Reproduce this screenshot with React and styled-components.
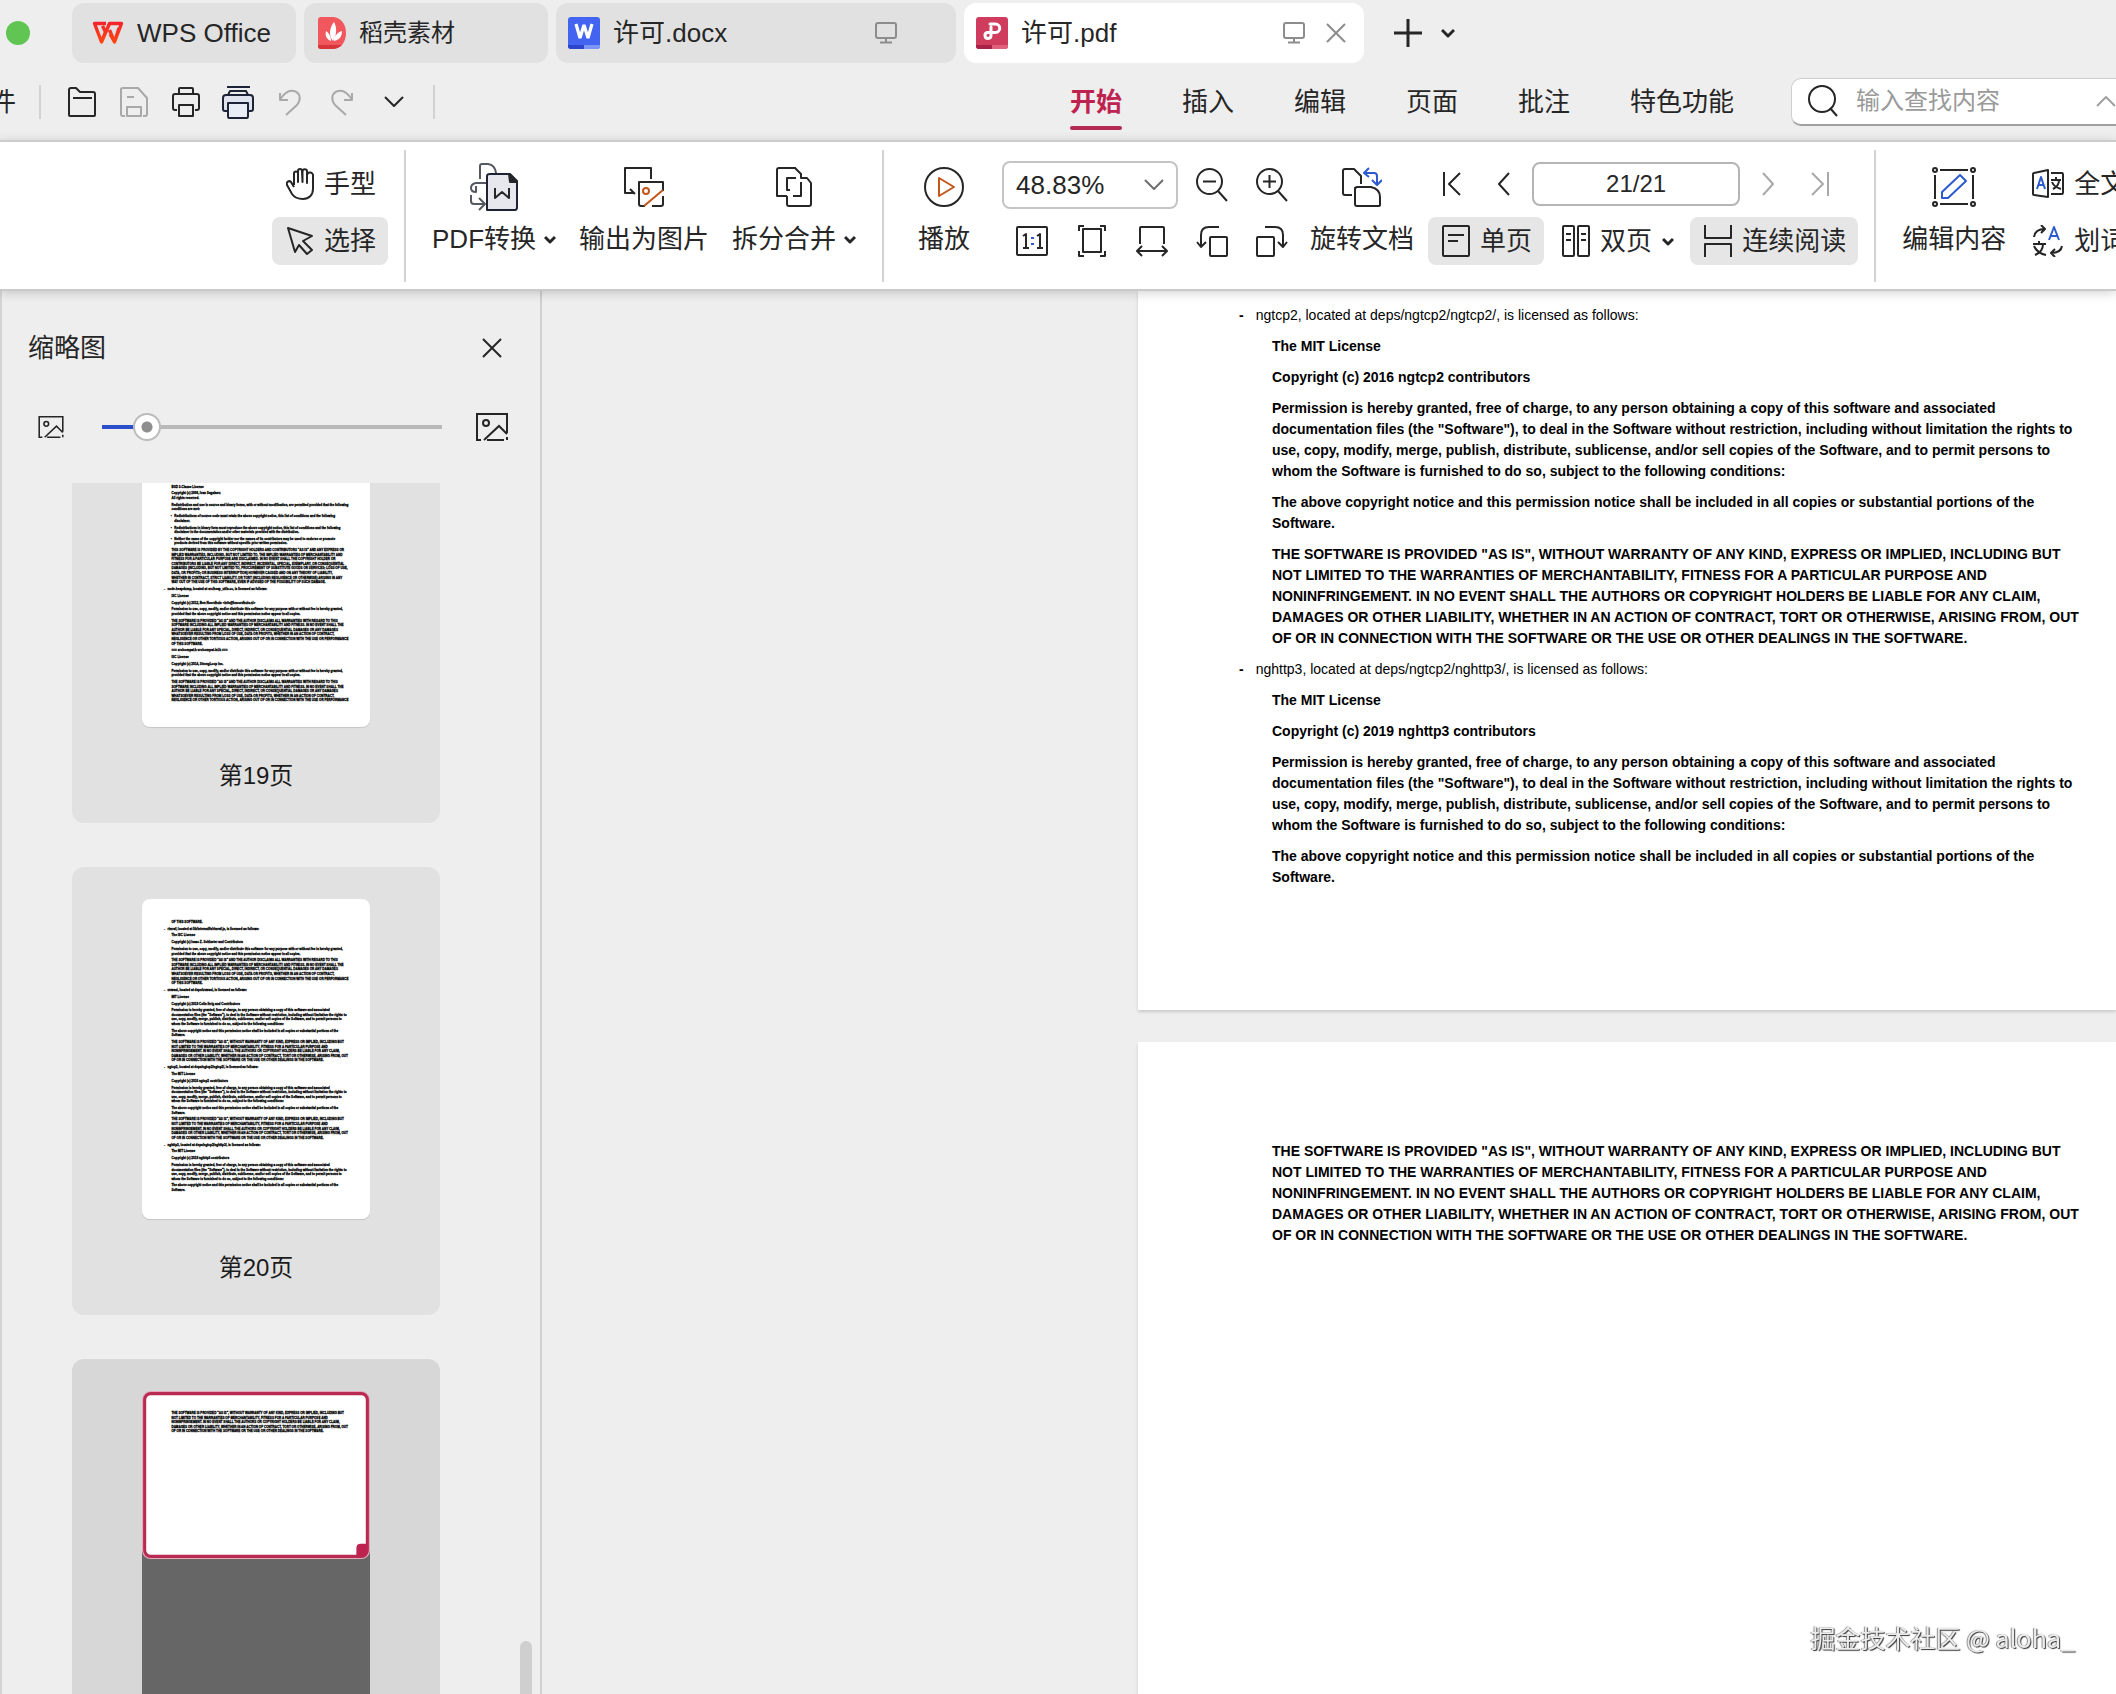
import React, { useLayoutEffect, useRef, useState } from 'react';
import styled, { createGlobalStyle, css } from 'styled-components';

const uiFont = '"Liberation Sans", "Noto Sans CJK SC", sans-serif';
const ink = '#262626';
const brand = '#be2350';

const GlobalStyle = createGlobalStyle`
  * { box-sizing: border-box; }
  body { margin: 0; background: #eeeeee; color: ${ink}; font-family: ${uiFont}; overflow: hidden; }
  button, input, select { font: inherit; color: inherit; margin: 0; }
  svg { display: block; flex: none; }
`;

/* ---------- document content ---------- */

const mitPermission = [
  'Permission is hereby granted, free of charge, to any person obtaining a copy of this software and associated',
  'documentation files (the "Software"), to deal in the Software without restriction, including without limitation the rights to',
  'use, copy, modify, merge, publish, distribute, sublicense, and/or sell copies of the Software, and to permit persons to',
  'whom the Software is furnished to do so, subject to the following conditions:',
];
const mitNotice = [
  'The above copyright notice and this permission notice shall be included in all copies or substantial portions of the',
  'Software.',
];
const mitWarranty = [
  'THE SOFTWARE IS PROVIDED "AS IS", WITHOUT WARRANTY OF ANY KIND, EXPRESS OR IMPLIED, INCLUDING BUT',
  'NOT LIMITED TO THE WARRANTIES OF MERCHANTABILITY, FITNESS FOR A PARTICULAR PURPOSE AND',
  'NONINFRINGEMENT. IN NO EVENT SHALL THE AUTHORS OR COPYRIGHT HOLDERS BE LIABLE FOR ANY CLAIM,',
  'DAMAGES OR OTHER LIABILITY, WHETHER IN AN ACTION OF CONTRACT, TORT OR OTHERWISE, ARISING FROM, OUT',
  'OF OR IN CONNECTION WITH THE SOFTWARE OR THE USE OR OTHER DEALINGS IN THE SOFTWARE.',
];
const iscPermission = [
  'Permission to use, copy, modify, and/or distribute this software for any purpose with or without fee is hereby granted,',
  'provided that the above copyright notice and this permission notice appear in all copies.',
];
const iscWarranty = [
  'THE SOFTWARE IS PROVIDED "AS IS" AND THE AUTHOR DISCLAIMS ALL WARRANTIES WITH REGARD TO THIS',
  'SOFTWARE INCLUDING ALL IMPLIED WARRANTIES OF MERCHANTABILITY AND FITNESS. IN NO EVENT SHALL THE',
  'AUTHOR BE LIABLE FOR ANY SPECIAL, DIRECT, INDIRECT, OR CONSEQUENTIAL DAMAGES OR ANY DAMAGES',
  'WHATSOEVER RESULTING FROM LOSS OF USE, DATA OR PROFITS, WHETHER IN AN ACTION OF CONTRACT,',
  'NEGLIGENCE OR OTHER TORTIOUS ACTION, ARISING OUT OF OR IN CONNECTION WITH THE USE OR PERFORMANCE',
];
const body = (...lines) => ({ kind: 'body', lines });
const item = (line) => ({ kind: 'item', lines: [line] });
const bullet = (...lines) => ({ kind: 'bullet', lines });

const page19 = [
  body('BSD 3-Clause License'),
  body('Copyright (c) 2006, Ivan Sagalaev.', 'All rights reserved.'),
  body(
    'Redistribution and use in source and binary forms, with or without modification, are permitted provided that the following',
    'conditions are met:'
  ),
  bullet('Redistributions of source code must retain the above copyright notice, this list of conditions and the following', 'disclaimer.'),
  bullet(
    'Redistributions in binary form must reproduce the above copyright notice, this list of conditions and the following',
    'disclaimer in the documentation and/or other materials provided with the distribution.'
  ),
  bullet(
    'Neither the name of the copyright holder nor the names of its contributors may be used to endorse or promote',
    'products derived from this software without specific prior written permission.'
  ),
  body(
    'THIS SOFTWARE IS PROVIDED BY THE COPYRIGHT HOLDERS AND CONTRIBUTORS "AS IS" AND ANY EXPRESS OR',
    'IMPLIED WARRANTIES, INCLUDING, BUT NOT LIMITED TO, THE IMPLIED WARRANTIES OF MERCHANTABILITY AND',
    'FITNESS FOR A PARTICULAR PURPOSE ARE DISCLAIMED. IN NO EVENT SHALL THE COPYRIGHT HOLDER OR',
    'CONTRIBUTORS BE LIABLE FOR ANY DIRECT, INDIRECT, INCIDENTAL, SPECIAL, EXEMPLARY, OR CONSEQUENTIAL',
    'DAMAGES (INCLUDING, BUT NOT LIMITED TO, PROCUREMENT OF SUBSTITUTE GOODS OR SERVICES; LOSS OF USE,',
    'DATA, OR PROFITS; OR BUSINESS INTERRUPTION) HOWEVER CAUSED AND ON ANY THEORY OF LIABILITY,',
    'WHETHER IN CONTRACT, STRICT LIABILITY, OR TORT (INCLUDING NEGLIGENCE OR OTHERWISE) ARISING IN ANY',
    'WAY OUT OF THE USE OF THIS SOFTWARE, EVEN IF ADVISED OF THE POSSIBILITY OF SUCH DAMAGE.'
  ),
  item('node-heapdump, located at src/heap_utils.cc, is licensed as follows:'),
  body('ISC License'),
  body('Copyright (c) 2012, Ben Noordhuis <info@bnoordhuis.nl>'),
  body(...iscPermission),
  body(...iscWarranty, 'OF THIS SOFTWARE.'),
  body('=== src/compat.h src/compat-inl.h ==='),
  body('ISC License'),
  body('Copyright (c) 2014, StrongLoop Inc.'),
  body(...iscPermission),
  body(...iscWarranty),
];

const page20Head = [
  body('OF THIS SOFTWARE.'),
  item('rimraf, located at lib/internal/fs/rimraf.js, is licensed as follows:'),
  body('The ISC License'),
  body('Copyright (c) Isaac Z. Schlueter and Contributors'),
  body(...iscPermission),
  body(...iscWarranty, 'OF THIS SOFTWARE.'),
  item('uvwasi, located at deps/uvwasi, is licensed as follows:'),
  body('MIT License'),
  body('Copyright (c) 2019 Colin Ihrig and Contributors'),
  body(...mitPermission),
  body(...mitNotice),
  body(...mitWarranty),
];
const page20Tail = [
  item('ngtcp2, located at deps/ngtcp2/ngtcp2/, is licensed as follows:'),
  body('The MIT License'),
  body('Copyright (c) 2016 ngtcp2 contributors'),
  body(...mitPermission),
  body(...mitNotice),
  body(...mitWarranty),
  item('nghttp3, located at deps/ngtcp2/nghttp3/, is licensed as follows:'),
  body('The MIT License'),
  body('Copyright (c) 2019 nghttp3 contributors'),
  body(...mitPermission),
  body(...mitNotice),
];

const page21 = [body(...mitWarranty)];

/* ---------- icons ---------- */

const Icon = ({ w = 28, h = 32, stroke = ink, sw = 2, children }) => (
  <svg width={w} height={h} viewBox={`0 0 ${w} ${h}`} fill="none" stroke={stroke} strokeWidth={sw} strokeLinejoin="round" aria-hidden="true">
    {children}
  </svg>
);

const WpsLogo = () => (
  <svg width="32" height="32" viewBox="0 0 32 32" fill="none" aria-hidden="true">
    <defs>
      <linearGradient id="wps" x1="0" y1="4" x2="0" y2="27" gradientUnits="userSpaceOnUse">
        <stop offset="0" stopColor="#f5202d" />
        <stop offset="1" stopColor="#ff4a10" />
      </linearGradient>
    </defs>
    <path d="M14 6.500H2.500L9.500 25L17.500 6.500H29.500L22.500 25L17.500 13M9.500 25L13.500 15L10.500 9M18 17L22.500 25L27 11" stroke="url(#wps)" strokeWidth="3.400" strokeLinejoin="round" />
  </svg>
);
const DocerLogo = () => (
  <svg width="28" height="32" viewBox="0 0 28 32" aria-hidden="true">
    <path d="M3 0H14C23 0 28 7 28 16S23 32 14 32H3Q0 32 0 29V3Q0 0 3 0Z" fill="#f0585d" />
    <path d="M0 28H24Q20 32 14 32H3Q0 32 0 29Z" fill="#d9363c" />
    <path d="M15 24C10 18 12 10 16 5C19 10 19 18 15 24ZM13 24C8 22 7 18 8 14C11 16 13 19 13 24ZM16 24C16 19 20 15 24 14C24 20 21 23 16 24Z" fill="#fff" />
  </svg>
);
const WordLogo = () => (
  <svg width="32" height="32" viewBox="0 0 32 32" aria-hidden="true">
    <rect width="32" height="32" rx="3" fill="#4264f0" />
    <path d="M0 28H16V32H3Q0 32 0 29Z" fill="#2b46cc" />
    <path d="M16 28H32V29Q32 32 29 32H16Z" fill="#7b94f7" />
    <path d="M8 7L12 21L16 8L20 21L24 7" fill="none" stroke="#fff" strokeWidth="3.200" strokeLinejoin="bevel" />
  </svg>
);
const PdfLogo = () => (
  <svg width="32" height="32" viewBox="0 0 32 32" aria-hidden="true">
    <rect width="32" height="32" rx="3" fill="#cf3c5d" />
    <path d="M0 28H16V32H3Q0 32 0 29Z" fill="#a82247" />
    <path d="M16 28H32V29Q32 32 29 32H16Z" fill="#e0607c" />
    <path d="M14 7H19.500A4 4 0 0 1 19.500 15.500H11.500A3 3 0 1 0 15 18.500V10" fill="none" stroke="#fff" strokeWidth="3" strokeLinecap="round" />
  </svg>
);
const Monitor = () => (
  <Icon w={24} h={24} stroke="#8c8c8c">
    <rect x="2" y="2" width="20" height="15" rx="2" />
    <path d="M12 17V21M6 21.500H18" />
  </Icon>
);
const Cross = ({ size = 20, color = ink }) => (
  <Icon w={size} h={size} stroke={color}>
    <path d={`M1 1L${size - 1} ${size - 1}M${size - 1} 1L1 ${size - 1}`} />
  </Icon>
);
const SmallChevron = () => (
  <Icon w={12} h={12} sw={3}>
    <path d="M1 4L6 9L11 4" />
  </Icon>
);
const ThinChevron = ({ color = ink, up }) => (
  <Icon w={20} h={12} stroke={color}>
    <path d={up ? 'M1 11L10 2L19 11' : 'M1 1L10 10L19 1'} />
  </Icon>
);

const quickIcons = [
  { label: '打开', art: <Icon><path d="M1 29V4Q1 2 3 2H8L12 6H25Q27 6 27 8V29Q27 30 26 30H2Q1 30 1 29ZM5 12H24" /></Icon> },
  { label: '保存', off: true, art: <Icon stroke="#a9a9a9"><path d="M5 30H3Q1 30 1 28V3Q1 2 3 2H18L27 12V28Q27 30 25 30H23M7 30V21H21V30ZM7 11H14" /></Icon> },
  { label: '打印', art: <Icon><path d="M7 8V3Q7 2 8 2H20Q21 2 21 3V8M5 24H3Q1 24 1 22V10Q1 8 3 8H25Q27 8 27 10V22Q27 24 25 24H23M7 19H21V30H7Z" /></Icon> },
  { label: '快速打印', art: <Icon w={32} h={34} stroke="#1d2438"><path d="M5 2H28M6 10L8 6H24L26 10" /><path d="M6 26H3Q1 26 1 24V13Q1 10 4 10H28Q31 10 31 13V24Q31 26 29 26H26" fill="#dfe4ee" /><path d="M6 18H26V31Q26 33 25 33H7Q6 33 6 31Z" fill="#e9edf6" /></Icon> },
  { label: '撤销', off: true, art: <Icon w={24} h={28} stroke="#a9a9a9"><path d="M2 5V12H10M2 12C6 5 11 2 16 3C23 5 23 12 19 17L8 27" /></Icon> },
  { label: '恢复', off: true, art: <Icon w={24} h={28} stroke="#a9a9a9"><path d="M22 5V12H14M22 12C18 5 13 2 8 3C1 5 1 12 5 17L16 27" /></Icon> },
  { label: '更多', art: <ThinChevron /> },
];

const HandIcon = () => (
  <Icon>
    <path d="M8 17V5.500A2 2 0 0 1 12 5.500V14V3A2 2 0 0 1 16 3L16.500 14V3.500A2 2 0 0 1 21 3.500V15V7A2 2 0 0 1 27 8V21C27 27 23 31 17 31C11 31 8 29 6 26L1 17C0 14 3 12 5 14L8 19" />
  </Icon>
);
const ArrowIcon = () => (
  <Icon>
    <path d="M2 3L26 11L17 16L26 25L21 29L13 20L9 27Z" />
  </Icon>
);
const ConvertIcon = () => (
  <Icon w={48} h={48}>
    <path d="M10 16V3Q10 1 12 1H18Q25 2 26 10M18 20H6Q1 21 1 25Q1 29 6 29V23M1 32V38Q1 41 4 41H14M9 35L15 41L9 47" stroke="#55585e" />
    <path d="M20 11H40L47 18V44Q47 47 45 47H17V13Q17 11 20 11Z" fill="#e6e8ee" stroke="#1d2333" />
    <path d="M39 11L47 19H40Z" fill="#1d2333" />
    <path d="M25 25V35L32 29L39 35V25" />
  </Icon>
);
const ExportIcon = () => (
  <Icon w={40} h={40}>
    <path d="M27 12V1H1V26H10M6 22L11 27M21 39H17Q15 39 15 37V15H39V24M39 29V37Q39 39 37 39H28" />
    <g stroke="#c2561b"><circle cx="22" cy="24" r="3" /><path d="M20 39L39 23" /></g>
  </Icon>
);
const MergeIcon = () => (
  <Icon w={36} h={40}>
    <path d="M20 1H3Q1 1 1 3V29H11M19 1L25 7V11H31L35 16V37Q35 39 33 39H13Q11 39 11 37V29" />
    <path d="M20 11H11V23H14M17 29H25V15" />
  </Icon>
);
const PlayIcon = () => (
  <Icon w={40} h={40}>
    <circle cx="20" cy="20" r="19" />
    <path d="M15 11V29L30 20Z" stroke="#c2561b" />
  </Icon>
);
const ZoomIcon = ({ plus }) => (
  <Icon w={32} h={34}>
    <circle cx="13.500" cy="13.500" r="12.500" />
    <path d={`M7 13.500H20M22 23L31 33${plus ? 'M13.500 7V20' : ''}`} />
  </Icon>
);
const RotateDocIcon = () => (
  <Icon w={40} h={40}>
    <path d="M10 28H3Q1 28 1 26V4Q1 2 3 2H12L19 9V17M15 20H29Q38 22 38 30V38Q38 39 36 39H15Q13 39 13 37V21Z" />
    <path d="M27 1L22 6L27 10M22 6H32Q35 6 35 9V17M30 13L35 18L40 13" stroke="#2c5bd0" />
  </Icon>
);
const ActualSizeIcon = () => (
  <Icon w={32} h={30}>
    <rect x="1" y="1" width="30" height="28" rx="1" />
    <path d="M7 10L10 8V22M7 22H13M21 10L24 8V22M21 22H27" />
    <path d="M15 12H18M15 18H18" stroke="#2c5bd0" />
  </Icon>
);
const FitPageIcon = () => (
  <Icon>
    <path d="M1 6V1H6M22 1H27V6M27 26V31H22M6 31H1V26" />
    <rect x="5" y="4" width="18" height="23" />
  </Icon>
);
const FitWidthIcon = () => (
  <Icon w={32} h={32}>
    <path d="M4 19V3Q4 2 5 2H27Q28 2 28 3V19M1 26H31M6 21L1 26L6 31M26 21L31 26L26 31" />
  </Icon>
);
const RotateLeftIcon = () => (
  <Icon w={32} h={32}>
    <rect x="14" y="12" width="17" height="19" rx="1" />
    <path d="M23 2H13Q5 2 5 10V22M1 17L5 22L10 17" />
  </Icon>
);
const RotateRightIcon = () => (
  <Icon w={32} h={32}>
    <rect x="1" y="12" width="17" height="19" rx="1" />
    <path d="M9 2H19Q27 2 27 10V22M22 17L27 22L31 17" />
  </Icon>
);
const SinglePageIcon = () => (
  <Icon><rect x="1" y="1" width="26" height="30" rx="1" /><path d="M6 10H22M6 16H16" /></Icon>
);
const DoublePageIcon = () => (
  <Icon><rect x="1" y="1" width="11" height="30" rx="1" /><rect x="16" y="1" width="11" height="30" rx="1" /><path d="M4 9H9M4 15H9M19 9H24M19 15H24" /></Icon>
);
const ContinuousIcon = () => (
  <Icon><path d="M1 0V13H27V0M1 32V19H27V32" /></Icon>
);
const EditIcon = () => (
  <Icon w={44} h={40}>
    <path d="M8 3H36M8 37H36M3 8V32M41 8V32" />
    <circle cx="3" cy="3" r="2" /><circle cx="41" cy="3" r="2" /><circle cx="3" cy="37" r="2" /><circle cx="41" cy="37" r="2" />
    <path d="M10 31V25L28 8L34 14L16 31Z" stroke="#2c5bd0" />
  </Icon>
);
const TranslateIcon = () => (
  <Icon w={32} h={32}>
    <path d="M1 6Q1 5 2 5L16 2V29L2 27Q1 27 1 26ZM19 5H30Q31 5 31 7V24Q31 26 30 26H19M19 12H29M24 9V12M21 21Q27 18 27 12M20 14Q22 19 29 21" />
    <path d="M5 21L9 9L13 21M6 17H12" stroke="#2c5bd0" />
  </Icon>
);
const WordTranslateIcon = () => (
  <Icon w={32} h={32}>
    <path d="M2 12Q3 4 13 4M9 0L13 4L9 8M30 21Q29 28 19 28M23 24L19 28L23 32M1 19H14M7 16V19M3 30Q11 27 11 19M2 21Q5 28 14 30" />
    <path d="M17 15L22 2L27 15M19 11H25" stroke="#2c5bd0" />
  </Icon>
);
const PictureIcon = ({ w, h }) => (
  <svg width={w} height={h} viewBox="0 0 32 28" fill="none" stroke={ink} strokeWidth="2" aria-hidden="true">
    <path d="M5 27H1V1H31V20M11 27H28M31 24V27" />
    <circle cx="10" cy="10" r="3" />
    <path d="M8 27L23 13L31 21" />
  </svg>
);

/* ---------- shell ---------- */

const Shell = styled.div`
  display: flex;
  flex-direction: column;
  height: 100vh;
  overflow: hidden;
`;
const TabStrip = styled.header`
  display: flex;
  align-items: center;
  gap: 8px;
  height: 63px;
  padding: 3px 6px 0;
`;
const WindowDot = styled.button`
  width: 24px;
  height: 24px;
  margin-right: 34px;
  padding: 0;
  border: 0;
  border-radius: 50%;
  background: #61c554;
`;
const Tab = styled.div`
  display: flex;
  align-items: center;
  gap: 20px;
  width: ${(p) => p.$width}px;
  height: 60px;
  padding: 0 ${(p) => (p.$active ? 18 : 58)}px 0 ${(p) => p.$pad}px;
  border-radius: 12px;
  background: ${(p) => (p.$active ? '#ffffff' : '#e1e1e1')};
`;
const TabTitle = styled.button`
  display: flex;
  flex: 1;
  align-items: center;
  gap: 13px;
  padding: 0;
  border: 0;
  background: none;
  font-size: ${(p) => p.$size}px;
  line-height: 32px;
  white-space: nowrap;
`;
const TabActions = styled.div`
  display: flex;
  align-items: center;
  gap: 19px;
  padding-left: 22px;
`;
const BareButton = styled.button`
  display: flex;
  align-items: center;
  justify-content: center;
  width: ${(p) => p.$w || 'auto'};
  height: ${(p) => p.$h || 'auto'};
  padding: 0;
  border: 0;
  background: none;
`;
const MenuBar = styled.div`
  display: flex;
  align-items: center;
  height: 77px;
  font-size: 26px;
  line-height: 32px;
`;
const FileMenu = styled.button`
  display: flex;
  justify-content: flex-end;
  width: 16px;
  margin-right: 23px;
  padding: 0;
  border: 0;
  background: none;
  overflow: hidden;
  white-space: nowrap;
`;
const Rule = styled.span`
  flex: none;
  width: 2px;
  height: ${(p) => p.$h}px;
  background: #d2d2d2;
`;
const QuickTools = styled.div`
  display: flex;
  padding: 0 13px 0 15px;
`;
const MenuTabs = styled.nav`
  display: flex;
  gap: 60px;
  margin-left: auto;
`;
const MenuTab = styled.button`
  display: flex;
  flex-direction: column;
  height: 56px;
  padding: 12px 0 0;
  border: 0;
  background: none;
  white-space: nowrap;
  ${(p) =>
    p.$active &&
    css`
      color: ${brand};
      font-weight: 700;
      &::after {
        content: '';
        width: 100%;
        height: 4px;
        margin-top: 8px;
        border-radius: 2px;
        background: #b42a50;
      }
    `}
`;
const SearchBox = styled.label`
  display: flex;
  align-items: center;
  gap: 18px;
  width: 325px;
  height: 48px;
  margin-left: 57px;
  padding-left: 16px;
  border: 1px solid #cfcfcf;
  border-right: 0;
  border-bottom: 2px solid #a0a0a0;
  border-radius: 10px 0 0 10px;
  background: #fff;
  overflow: hidden;
  input {
    flex: 1;
    min-width: 0;
    padding: 0;
    border: 0;
    outline: 0;
    background: none;
    font-size: 24px;
  }
  input::placeholder { color: #9a9a9a; opacity: 1; }
`;

/* ---------- ribbon ---------- */

const Ribbon = styled.div`
  position: relative;
  z-index: 1;
  display: flex;
  height: 151px;
  padding: 8px 0 0 272px;
  border-top: 2px solid #cccccc;
  border-bottom: 2px solid #cacaca;
  background: #fff;
  box-shadow: 0 2px 10px rgba(0, 0, 0, 0.18);
  font-size: 26px;
  line-height: 32px;
  white-space: nowrap;
`;
const Group = styled.div`
  display: flex;
  flex: none;
  gap: ${(p) => p.$gap || 0}px;
  padding: 10px ${(p) => p.$right}px 0 ${(p) => p.$left}px;
`;
const Stack = styled.div`
  display: flex;
  flex-direction: column;
  align-items: flex-start;
  gap: 9px;
`;
const Row = styled.div`
  display: flex;
  align-items: center;
  gap: 4px;
  height: 48px;
`;
const ToolButton = styled.button`
  display: flex;
  align-items: center;
  gap: 10px;
  height: 48px;
  padding: 0 12px 0 14px;
  border: 0;
  border-radius: 8px;
  background: ${(p) => (p.$active ? '#e6e6e6' : 'transparent')};
`;
const BigButton = styled.button`
  display: flex;
  flex-direction: column;
  align-items: center;
  padding: 3px 0 0;
  border: 0;
  background: none;
`;
const IconWell = styled.span`
  display: flex;
  align-items: center;
  height: 48px;
  margin-bottom: 12px;
`;
const BigLabel = styled.span`
  display: flex;
  align-items: center;
  gap: 8px;
`;
const ZoomGrid = styled.div`
  display: grid;
  grid-template-columns: repeat(5, 60px);
  grid-auto-rows: 48px;
  row-gap: 8px;
  padding-top: 1px;
  margin: 0 8px 0 32px;
`;
const ZoomSelect = styled.span`
  display: grid;
  grid-column: span 3;
  width: 176px;
  border: 2px solid #c4c4c4;
  border-radius: 8px;
  align-items: center;
  select, svg { grid-area: 1 / 1; }
  select {
    appearance: none;
    height: 44px;
    padding: 0 12px;
    border: 0;
    background: none;
    outline: 0;
  }
  svg { justify-self: end; margin-right: 12px; pointer-events: none; }
`;
const NavBlock = styled(Stack)`
  margin-left: 14px;
`;
const PageInput = styled.input`
  width: 208px;
  height: 44px;
  padding: 0;
  border: 2px solid #b5b5b5;
  border-radius: 8px;
  background: #fff;
  font-size: 24px;
  text-align: center;
`;

/* ---------- workspace ---------- */

const Workspace = styled.div`
  display: flex;
  flex: 1;
  min-height: 0;
`;
const Sidebar = styled.aside`
  display: flex;
  flex: none;
  flex-direction: column;
  width: 542px;
  border-right: 2px solid #d0d0d0;
  border-left: 2px solid #d4d4d4;
`;
const SidebarHead = styled.div`
  display: flex;
  align-items: center;
  justify-content: space-between;
  padding: 41px 38px 0 26px;
  h2 { margin: 0; font-size: 26px; font-weight: 400; line-height: 32px; }
`;
const SizeRow = styled.div`
  display: flex;
  align-items: center;
  height: 40px;
  margin: 43px 32px 36px 36px;
`;
const Slider = styled.input`
  appearance: none;
  width: 340px;
  height: 28px;
  margin: 0 34px 0 38px;
  background: linear-gradient(#2b50cc, #2b50cc) 0 50% / 40px 4px no-repeat,
    linear-gradient(#b9b9b9, #b9b9b9) 0 50% / 100% 4px no-repeat;
  &::-webkit-slider-thumb {
    appearance: none;
    width: 28px;
    height: 28px;
    border: 2px solid #bcbcbc;
    border-radius: 50%;
    background: radial-gradient(circle, #8e8e8e 0 5px, #fff 6px);
  }
`;
const ThumbArea = styled.div`
  display: flex;
  flex: 1;
  min-height: 0;
  justify-content: space-between;
  padding: 0 8px 0 70px;
`;
const ThumbList = styled.ol`
  display: flex;
  flex-direction: column;
  gap: 44px;
  width: 368px;
  margin: 0;
  padding: 0;
  overflow-y: scroll;
  scrollbar-width: none;
  list-style: none;
`;
const ThumbCard = styled.li`
  display: flex;
  flex: none;
  flex-direction: column;
  align-items: center;
  height: 448px;
  padding-top: 32px;
  border-radius: 12px;
  background: ${(p) => (p.$active ? '#d7d7d7' : '#e1e1e1')};
`;
const ThumbFrame = styled.button`
  display: flex;
  flex: none;
  align-items: flex-start;
  width: 228px;
  height: 320px;
  padding: 0;
  border: 0;
  border-radius: 8px;
  background: ${(p) => (p.$active ? 'linear-gradient(transparent 160px, #666666 160px)' : '#ffffff')};
  box-shadow: ${(p) => (p.$active ? 'none' : '0 1px 1px rgba(0, 0, 0, 0.12)')};
  overflow: hidden;
`;
const ThumbLabel = styled.span`
  margin-top: 33px;
  color: #1c1c1c;
  font-size: 24px;
  line-height: 32px;
`;
const ScrollTrack = styled.div`
  display: flex;
  align-items: flex-end;
  width: 12px;
`;
const ScrollThumb = styled.div`
  width: 12px;
  height: 53px;
  border-radius: 6px 6px 0 0;
  background: #cfcfcf;
`;
const Viewer = styled.main`
  display: flex;
  flex: 1;
  flex-direction: column;
  gap: 32px;
  min-width: 0;
  padding-left: 596px;
  overflow: hidden;
`;
const Sheet = styled.article`
  flex: ${(p) => (p.$continued ? 'none' : '1')};
  padding: ${(p) => (p.$continued ? '14px 0 112px 134px' : '99px 0 0 134px')};
  background: #fff;
  box-shadow: 0 2px 3px rgba(0, 0, 0, 0.15);
  color: #000;
  font-family: "Liberation Sans", Arial, sans-serif;
  font-size: 14px;
  line-height: 21px;
  white-space: nowrap;
`;
const Para = styled.p`
  margin: 0 0 10px;
  font-weight: 700;
  span { display: block; }
`;
const ItemPara = styled.p`
  display: flex;
  gap: 12px;
  margin: 0 0 10px -33px;
`;
const Watermark = styled.div`
  position: fixed;
  right: 41px;
  bottom: 41px;
  z-index: 2;
  color: #ececec;
  font-family: "Noto Sans CJK SC", sans-serif;
  font-size: 25px;
  line-height: 32px;
  text-shadow: 1px 1px 1px #333, -1px 0 1px #8a8a8a;
`;

/* ---------- parts ---------- */

function SheetText({ blocks }) {
  return blocks.map((b, i) =>
    b.kind === 'item' ? (
      <ItemPara key={i}>
        <b>-</b>
        <span>{b.lines[0]}</span>
      </ItemPara>
    ) : (
      <Para key={i}>
        {b.lines.map((l) => (
          <span key={l}>{l}</span>
        ))}
      </Para>
    )
  );
}

/* Miniature of a page, drawn in the coordinates of the full sheet. */
function Miniature({ blocks, start, active }) {
  let y = start;
  const rows = [];
  blocks.forEach((b, i) => {
    b.lines.forEach((line, j) => {
      const x = b.kind === 'item' ? 116 : b.kind === 'bullet' ? 147 : 134;
      if (b.kind !== 'body' && j === 0) {
        rows.push(<text key={`m${i}`} x={x - 16} y={y}>{b.kind === 'item' ? '-' : '•'}</text>);
      }
      rows.push(<text key={`${i}-${j}`} x={x} y={y}>{line}</text>);
      y += 20.75;
    });
    y += 10.25;
  });
  return (
    <svg
      width="228"
      height={active ? 168 : 320}
      viewBox={`0 0 1038 ${active ? 765 : 1457}`}
      fontFamily="Liberation Sans, Arial, sans-serif"
      fontSize="14"
      fontWeight="700"
      stroke="#000"
      strokeWidth="1.200"
      aria-hidden="true"
    >
      {active && <rect x="7" y="7" width="1024" height="751" rx="32" fill="#fff" stroke="#e6a9ba" strokeWidth="14" />}
      {active && <rect x="12" y="12" width="1014" height="741" rx="28" fill="#fff" stroke="#b82a52" strokeWidth="14" />}
      {rows}
      {active && <path d="M976 745V715Q976 695 996 695H1026V735Q1024 752 1006 753H976Z" fill={brand} stroke="none" />}
    </svg>
  );
}

function useInitialScroll(top) {
  const ref = useRef(null);
  useLayoutEffect(() => {
    ref.current.scrollTop = top;
  }, [top]);
  return ref;
}

const thumbs = [
  { page: 19, blocks: page19, start: 367 },
  { page: 20, blocks: [...page20Head, ...page20Tail], start: 108 },
  { page: 21, blocks: page21, start: 105, active: true },
];

export default function App() {
  const listRef = useInitialScroll(108);
  const [size, setSize] = useState(10);
  const [query, setQuery] = useState('');

  return (
    <Shell>
      <GlobalStyle />
      <TabStrip>
        <WindowDot aria-label="全屏" />
        <Tab $width={224} $pad={20}>
          <TabTitle $size={26}><WpsLogo />WPS Office</TabTitle>
        </Tab>
        <Tab $width={244} $pad={14}>
          <TabTitle $size={24}><DocerLogo />稻壳素材</TabTitle>
        </Tab>
        <Tab $width={400} $pad={12}>
          <TabTitle $size={26}><WordLogo />许可.docx</TabTitle>
          <Monitor />
        </Tab>
        <Tab $width={400} $pad={12} $active>
          <TabTitle $size={26}><PdfLogo />许可.pdf</TabTitle>
          <Monitor />
          <BareButton aria-label="关闭标签"><Cross color="#8c8c8c" /></BareButton>
        </Tab>
        <TabActions>
          <BareButton aria-label="新建标签">
            <Icon w={28} h={28} sw={3}><path d="M14 0V28M0 14H28" /></Icon>
          </BareButton>
          <BareButton aria-label="标签列表">
            <Icon w={14} h={12}><path d="M1 3L7 9L13 3" strokeWidth="3" /></Icon>
          </BareButton>
        </TabActions>
      </TabStrip>

      <MenuBar>
        <FileMenu>文件</FileMenu>
        <Rule $h={34} />
        <QuickTools>
          {quickIcons.map((q) => (
            <BareButton key={q.label} $w="52px" $h="40px" aria-label={q.label} disabled={q.off}>{q.art}</BareButton>
          ))}
        </QuickTools>
        <Rule $h={34} />
        <MenuTabs>
          {['开始', '插入', '编辑', '页面', '批注', '特色功能'].map((name, i) => (
            <MenuTab key={name} $active={i === 0}>{name}</MenuTab>
          ))}
        </MenuTabs>
        <SearchBox>
          <Icon w={30} h={32}><circle cx="14" cy="14" r="13" /><path d="M22 23L29 31" /></Icon>
          <input aria-label="查找" placeholder="输入查找内容" value={query} onChange={(e) => setQuery(e.target.value)} />
          <ThinChevron up color="#a0a0a0" />
        </SearchBox>
      </MenuBar>

      <Ribbon>
        <Group $left={0} $right={16}>
          <Stack>
            <ToolButton><HandIcon />手型</ToolButton>
            <ToolButton $active><ArrowIcon />选择</ToolButton>
          </Stack>
        </Group>
        <Rule $h={132} />
        <Group $left={26} $right={26} $gap={23}>
          <BigButton><IconWell><ConvertIcon /></IconWell><BigLabel>PDF转换<SmallChevron /></BigLabel></BigButton>
          <BigButton><IconWell><ExportIcon /></IconWell><BigLabel>输出为图片</BigLabel></BigButton>
          <BigButton><IconWell><MergeIcon /></IconWell><BigLabel>拆分合并<SmallChevron /></BigLabel></BigButton>
        </Group>
        <Rule $h={132} />
        <Group $left={34} $right={16}>
          <BigButton><IconWell><PlayIcon /></IconWell><BigLabel>播放</BigLabel></BigButton>
          <ZoomGrid>
            <ZoomSelect>
              <select aria-label="缩放比例" defaultValue="48.83%">
                <option>48.83%</option>
                <option>100%</option>
              </select>
              <ThinChevron color="#6e6e6e" />
            </ZoomSelect>
            <BareButton aria-label="缩小"><ZoomIcon /></BareButton>
            <BareButton aria-label="放大"><ZoomIcon plus /></BareButton>
            <BareButton aria-label="实际大小"><ActualSizeIcon /></BareButton>
            <BareButton aria-label="适合页面"><FitPageIcon /></BareButton>
            <BareButton aria-label="适合宽度"><FitWidthIcon /></BareButton>
            <BareButton aria-label="向左旋转"><RotateLeftIcon /></BareButton>
            <BareButton aria-label="向右旋转"><RotateRightIcon /></BareButton>
          </ZoomGrid>
          <BigButton><IconWell><RotateDocIcon /></IconWell><BigLabel>旋转文档</BigLabel></BigButton>
          <NavBlock>
            <Row>
              <BareButton $w="48px" aria-label="第一页"><Icon w={18} h={24}><path d="M1 0V24M17 1L6 12L17 23" /></Icon></BareButton>
              <BareButton $w="48px" aria-label="上一页"><Icon w={12} h={24}><path d="M11 1L1 12L11 23" /></Icon></BareButton>
              <PageInput aria-label="页码" defaultValue="21/21" />
              <BareButton $w="48px" aria-label="下一页" disabled><Icon w={12} h={24} stroke="#a9a9a9"><path d="M1 1L11 12L1 23" /></Icon></BareButton>
              <BareButton $w="48px" aria-label="最后一页" disabled><Icon w={18} h={24} stroke="#a9a9a9"><path d="M17 0V24M1 1L12 12L1 23" /></Icon></BareButton>
            </Row>
            <Row>
              <ToolButton $active><SinglePageIcon />单页</ToolButton>
              <ToolButton><DoublePageIcon />双页<SmallChevron /></ToolButton>
              <ToolButton $active><ContinuousIcon />连续阅读</ToolButton>
            </Row>
          </NavBlock>
        </Group>
        <Rule $h={132} />
        <Group $left={26} $right={0} $gap={12}>
          <BigButton><IconWell><EditIcon /></IconWell><BigLabel>编辑内容</BigLabel></BigButton>
          <Stack>
            <ToolButton><TranslateIcon />全文翻译</ToolButton>
            <ToolButton><WordTranslateIcon />划词翻译</ToolButton>
          </Stack>
        </Group>
      </Ribbon>

      <Workspace>
        <Sidebar>
          <SidebarHead>
            <h2>缩略图</h2>
            <BareButton aria-label="关闭缩略图"><Cross /></BareButton>
          </SidebarHead>
          <SizeRow>
            <PictureIcon w={26} h={22} />
            <Slider type="range" min="0" max="100" aria-label="缩略图大小" value={size} onChange={(e) => setSize(Number(e.target.value))} />
            <PictureIcon w={32} h={28} />
          </SizeRow>
          <ThumbArea>
            <ThumbList ref={listRef}>
              {thumbs.map((t) => (
                <ThumbCard key={t.page} $active={t.active}>
                  <ThumbFrame $active={t.active} aria-label={`跳转到第${t.page}页`}>
                    <Miniature blocks={t.blocks} start={t.start} active={t.active} />
                  </ThumbFrame>
                  <ThumbLabel>第{t.page}页</ThumbLabel>
                </ThumbCard>
              ))}
            </ThumbList>
            <ScrollTrack><ScrollThumb /></ScrollTrack>
          </ThumbArea>
        </Sidebar>
        <Viewer>
          <Sheet $continued><SheetText blocks={page20Tail} /></Sheet>
          <Sheet><SheetText blocks={page21} /></Sheet>
        </Viewer>
      </Workspace>
      <Watermark>掘金技术社区 @ aloha_</Watermark>
    </Shell>
  );
}
